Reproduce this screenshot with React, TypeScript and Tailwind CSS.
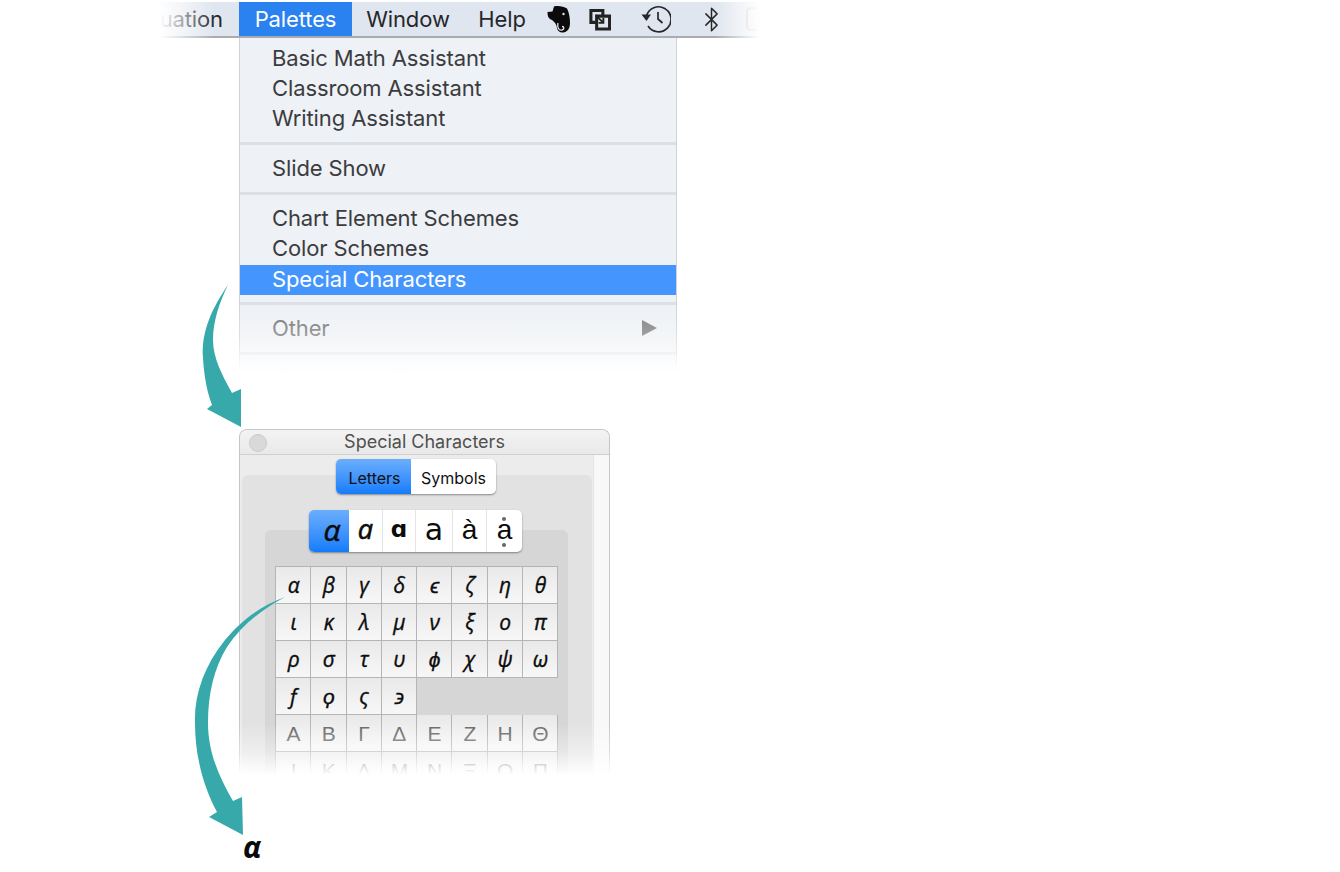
import { Bluetooth } from "lucide-react";

const sans = "font-['Inter','Liberation_Sans',sans-serif]";

const lower = [
  ["α", "β", "γ", "δ", "ϵ", "ζ", "η", "θ"],
  ["ι", "κ", "λ", "μ", "ν", "ξ", "ο", "π"],
  ["ρ", "σ", "τ", "υ", "ϕ", "χ", "ψ", "ω"],
  ["ƒ", "ϙ", "ς", "϶"],
];
const upper = [
  ["Α", "Β", "Γ", "Δ", "Ε", "Ζ", "Η", "Θ"],
  ["Ι", "Κ", "Λ", "Μ", "Ν", "Ξ", "Ο", "Π"],
];

const MenuRow = ({ label, active, muted }: { label: string; active?: boolean; muted?: boolean }) => (
  <div
    className={`h-[30px] pl-[32px] flex items-center justify-between pr-[19px] text-[22px] tracking-[-0.12px] ${
      active ? "bg-[#4496fe] text-white mt-[2px] -mb-[2px] pb-[2px]" : muted ? "text-[#6f6f71]" : "text-[#3b3c40]"
    }`}
  >
    <span>{label}</span>
    {muted && label === "Other" && (
      <svg width="15" height="16" viewBox="0 0 15 16">
        <path d="M0 0L15 8L0 16Z" fill="#78787a" />
      </svg>
    )}
  </div>
);

const MenuSep = () => (
  <div className="h-[20px] flex items-center">
    <div className="w-full h-[3px] bg-[#dcdfe4]" />
  </div>
);

const Cell = ({ ch, faded }: { ch: string; faded?: boolean }) => (
  <div
    className={`w-[35.25px] h-[37px] pl-[1px] pt-[1px] flex items-center justify-center border-r border-b border-[#b5b5b5] bg-linear-to-b from-[#e9e9e9] to-[#f7f7f7] text-[21px] ${
      faded
        ? "font-['Liberation_Sans',sans-serif] text-[#666]"
        : "font-['Open_Sans',sans-serif] italic [-webkit-text-stroke:0.35px_#0c0c0c] text-[#0c0c0c]"
    }`}
  >
    {ch}
  </div>
);

const Arrows = () => (
  <svg className="absolute left-0 top-0 pointer-events-none" width="1340" height="872" viewBox="0 0 1340 872">
    <path
      d="M228 285C212 308 201 332 203 358C204 376 207 392 212 405L207 409L241 427L241 389L232 393C222 375 213 358 213 340C213 322 219 303 228 285Z"
      fill="#38a9ab"
    />
    <path
      d="M285 597C258 607 240 622 225 640C204 666 194 695 195 723C195 757 204 788 217 812L209 817L243 835L242 797L233 801C219 777 208 752 208 723C208 694 214 668 227 647C242 625 261 610 285 597Z"
      fill="#38a9ab"
    />
  </svg>
);

const App = () => {
  return (
    <div className={`relative w-[1340px] h-[872px] bg-white overflow-hidden ${sans}`}>
      {/* menu bar */}
      <div className="pt-[2px] pl-[160px]">
        <div className="relative w-[600px] h-[36px]">
          <div className="h-full flex overflow-hidden bg-[#e0e6ef] border-b-2 border-[#a9abb0] text-[22px] tracking-[-0.12px] text-[#26272b]">
            <div className="w-[63px] shrink-0 overflow-hidden flex justify-end items-center">
              <span>Evaluation</span>
            </div>
            <div className="ml-[16px] w-[113px] shrink-0 flex items-center justify-center bg-[#2a82f0] text-white">Palettes</div>
            <div className="ml-[15px] w-[82px] shrink-0 flex items-center justify-center">Window</div>
            <div className="ml-[29px] w-[48px] shrink-0 flex items-center justify-center">Help</div>
            <div className="ml-[21px] w-[24px] shrink-0 flex items-center">
              <svg width="24" height="27" viewBox="0 0 24 27">
                <path
                  d="M7 0.5C11 -0.5 17 0.5 20 2.5C22 6 23 12 23 17C23 22 21 26 16 26.5C13 26.8 10.5 25 10 22C9.5 19 8.5 16.5 5 14C2 13 0.5 11 0.5 6L5.5 5.5Z"
                  fill="#0b0b0b"
                />
                <path d="M11 17C10 21 11.5 24.5 15 24C17.5 23.5 17.5 20.5 15 20.5" fill="none" stroke="#e0e6ef" strokeWidth="1.3" />
                <circle cx="16.5" cy="8" r="1.2" fill="#e0e6ef" />
              </svg>
            </div>
            <div className="ml-[18px] w-[22px] shrink-0 flex items-center pt-[1px]">
              <svg width="23" height="23" viewBox="0 0 23 23" fill="none" stroke="#222" strokeWidth="3.2">
                <path d="M14.5 8V2H2V14.5H8" />
                <path d="M8 8H21.5V21.5H8Z" />
                <path d="M7 7L15 15M15 10V15H10" strokeWidth="2" />
              </svg>
            </div>
            <div className="ml-[30px] w-[30px] shrink-0 flex items-center">
              <svg width="30" height="28" viewBox="0 0 30 28" fill="none" stroke="#26272b" strokeWidth="1.7">
                <path d="M5.5 11A12.5 12.5 0 1 1 7 21" />
                <path d="M0.5 9.5H10L5.5 16Z" fill="#26272b" stroke="none" />
                <path d="M17 7V14L21.5 18" />
              </svg>
            </div>
            <div className="ml-[27px] w-[27px] shrink-0 flex items-center">
              <Bluetooth size={27} strokeWidth={1.3} color="#26272b" />
            </div>
            <div className="ml-[21px] w-[14px] shrink-0 flex items-center">
              <div className="w-[14px] h-[24px] shrink-0 rounded-[5px] border-2 border-[#bdbdbd]" />
            </div>
          </div>
          <div className="absolute left-0 top-0 bottom-0 w-[55px] bg-linear-to-r from-white to-transparent" />
          <div className="absolute right-0 top-0 bottom-0 w-[45px] bg-linear-to-l from-white to-transparent" />
        </div>
      </div>

      {/* dropdown */}
      <div className="relative ml-[239px] w-[438px] h-[334px]">
        <div className="h-full overflow-hidden bg-[#eef1f5] border-x border-[#cfd1d5] pt-[5px]">
          <MenuRow label="Basic Math Assistant" />
          <MenuRow label="Classroom Assistant" />
          <MenuRow label="Writing Assistant" />
          <MenuSep />
          <MenuRow label="Slide Show" />
          <MenuSep />
          <MenuRow label="Chart Element Schemes" />
          <MenuRow label="Color Schemes" />
          <MenuRow label="Special Characters" active />
          <MenuSep />
          <MenuRow label="Other" muted />
          <MenuSep />
          <MenuRow label="Compound Control" muted />
        </div>
        <div className="absolute left-0 right-0 bottom-0 h-[72px] bg-linear-to-b from-white/0 via-white/30 to-white" />
      </div>

      {/* palette window */}
      <div className="relative mt-[57px] ml-[239px] w-[371px] h-[346px]">
        <div className="h-full overflow-hidden rounded-t-[8px] border-x border-t border-[#c6c6c6] bg-[#ececec]">
          <div className="relative h-[25px] pb-[2px] bg-linear-to-b from-[#f3f3f3] to-[#e9e9e9] border-b border-[#d0d0d0] flex items-center justify-center text-[18px] text-[#505050]">
            <div className="absolute left-[9px] top-[4px] w-[18px] h-[18px] rounded-full bg-[#d9d9d9] border border-[#cbcbcb]" />
            Special Characters
          </div>
          <div className="flex h-[320px]">
            <div className="w-[353px] pl-[2px] pt-[20px]">
              <div className="relative w-[350px] h-[300px] bg-[#e2e2e2] rounded-t-[6px] pt-[55px] px-[23px]">
                {/* Letters / Symbols */}
                <div className="absolute left-[94px] top-[-16px] w-[160px] h-[35px] pt-0 flex rounded-[5px] overflow-hidden shadow-[0_1px_2px_rgba(0,0,0,0.4)] bg-white text-[16px] text-[#111]">
                  <div className="w-[75px] pt-[2px] pl-[2px] flex items-center justify-center bg-linear-to-b from-[#6aaefc] to-[#0f7cfb]">Letters</div>
                  <div className="flex-1 pt-[2px] flex items-center justify-center">Symbols</div>
                </div>
                <div className="relative w-[303px] h-[300px] bg-[#d6d6d6] rounded-t-[6px] pt-[36px] px-[10px]">
                  {/* variant picker */}
                  <div className="absolute left-[44px] top-[-20px] w-[213px] h-[42px] flex rounded-[5px] overflow-hidden shadow-[0_1px_2px_rgba(0,0,0,0.4)] bg-white text-[#0c0c0c]">
                    <div className="w-[40px] pb-[3px] pl-[6px] flex items-center justify-center bg-linear-to-b from-[#6aaefc] to-[#0f7cfb] italic [-webkit-text-stroke:0.5px_#0c0c0c] font-['Open_Sans',sans-serif] text-[30px]">α</div>
                    <div className="w-[34px] pb-[3px] flex items-center justify-center border-r border-[#e5e5e5] italic [-webkit-text-stroke:0.6px_#0c0c0c] font-['Open_Sans',sans-serif] text-[27px]">a</div>
                    <div className="w-[33px] pb-[3px] flex items-center justify-center border-r border-[#e5e5e5] font-['DejaVu_Sans',sans-serif] font-bold text-[23px]">ɑ</div>
                    <div className="w-[37px] pb-[4px] flex items-center justify-center border-r border-[#e5e5e5] font-['DejaVu_Sans',sans-serif] text-[30px]">a</div>
                    <div className="w-[34px] pb-[3px] flex items-center justify-center border-r border-[#e5e5e5] font-['Liberation_Sans',sans-serif] text-[28px]">à</div>
                    <div className="relative flex-1 pb-[3px] flex items-center justify-center font-['Liberation_Sans',sans-serif] text-[28px]">
                      a
                      <div className="absolute left-[15px] top-[7px] w-[4px] h-[4px] rounded-full bg-[#666]" />
                      <div className="absolute left-[15px] top-[33px] w-[4px] h-[4px] rounded-full bg-[#666]" />
                    </div>
                  </div>
                  <div className="w-[283px] border-l border-t border-[#b5b5b5]">
                    {lower.map((row, i) => (
                      <div key={i} className="flex">
                        {row.map((c) => (
                          <Cell key={c} ch={c} />
                        ))}
                      </div>
                    ))}
                    {upper.map((row, i) => (
                      <div key={i} className="flex">
                        {row.map((c) => (
                          <Cell key={c} ch={c} faded />
                        ))}
                      </div>
                    ))}
                  </div>
                </div>
              </div>
            </div>
            <div className="flex-1 bg-[#f8f8f8] border-l border-[#e6e6e6]" />
          </div>
        </div>
        <div className="absolute left-0 right-0 bottom-0 h-[80px] bg-linear-to-b from-white/0 from-35% via-white/40 via-70% to-white" />
      </div>

      {/* result glyph */}
      <div className="mt-[54px] ml-[243px] leading-[36px] text-[30px] font-bold italic text-[#0a0a0a] font-['Open_Sans',sans-serif]">α</div>

      <Arrows />
    </div>
  );
};

export default App;
